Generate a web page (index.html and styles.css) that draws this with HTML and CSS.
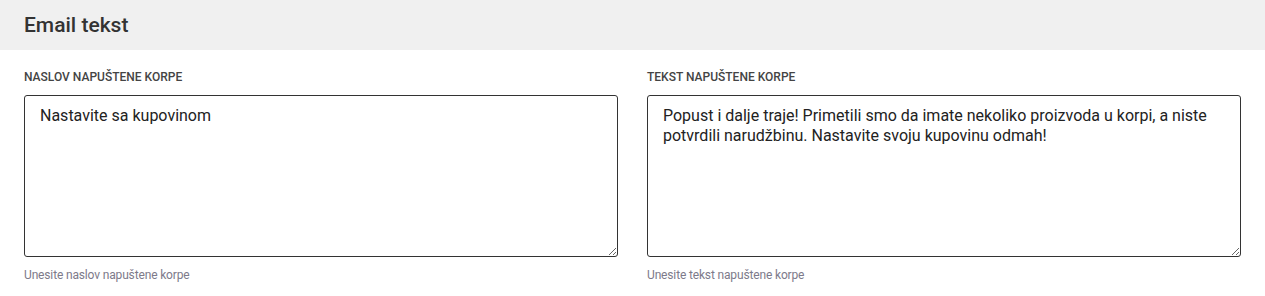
FILE: index.html
```html
<!DOCTYPE html>
<html lang="sr">
<head>
  <meta charset="UTF-8" />
  <meta name="viewport" content="width=device-width, initial-scale=1.0" />
  <title>Email tekst</title>
  <link rel="stylesheet" href="styles.css">
</head>
<body>

  <header class="section-head">
    <h2>Email tekst</h2>
  </header>

  <section class="field-grid">
    <div class="field">
      <label for="subject">Naslov napuštene korpe</label>
      <textarea id="subject">Nastavite sa kupovinom</textarea>
      <small>Unesite naslov napuštene korpe</small>
    </div>
    <div class="field">
      <label for="body">Tekst napuštene korpe</label>
      <textarea id="body">Popust i dalje traje! Primetili smo da imate nekoliko proizvoda u korpi, a niste potvrdili narudžbinu. Nastavite svoju kupovinu odmah!</textarea>
      <small>Unesite tekst napuštene korpe</small>
    </div>
  </section>

</body>
</html>
```

FILE: styles.css
```css
html, body {
  margin: 0;
  padding: 0;
  font-family: Roboto, "Liberation Sans", Arial, sans-serif;
  background-color: #fff;
}

.section-head {
  background-color: #f0f0f0;
  height: 50px;
  padding: 0 24px;
  display: flex;
  align-items: center;
}

.section-head h2 {
  margin: 0;
  font-size: 21px;
  font-weight: 500;
  color: #333;
}

.field-grid {
  display: grid;
  grid-template-columns: 1fr 1fr;
  gap: 29px;
  padding: 20px 24px 0;
}

.field {
  display: flex;
  flex-direction: column;
}

.field label {
  font-size: 12px;
  font-weight: 500;
  text-transform: uppercase;
  color: #444;
  line-height: 14px;
  margin-bottom: 11px;
}

.field textarea {
  box-sizing: border-box;
  height: 162px;
  padding: 10px 15px;
  border: 1px solid #333;
  border-radius: 3px;
  font-family: inherit;
  font-size: 16px;
  line-height: 20px;
  color: #222;
  resize: vertical;
  outline: none;
}

.field small {
  margin-top: 11px;
  font-size: 12px;
  letter-spacing: -0.15px;
  color: #7d7a8a;
}
```
